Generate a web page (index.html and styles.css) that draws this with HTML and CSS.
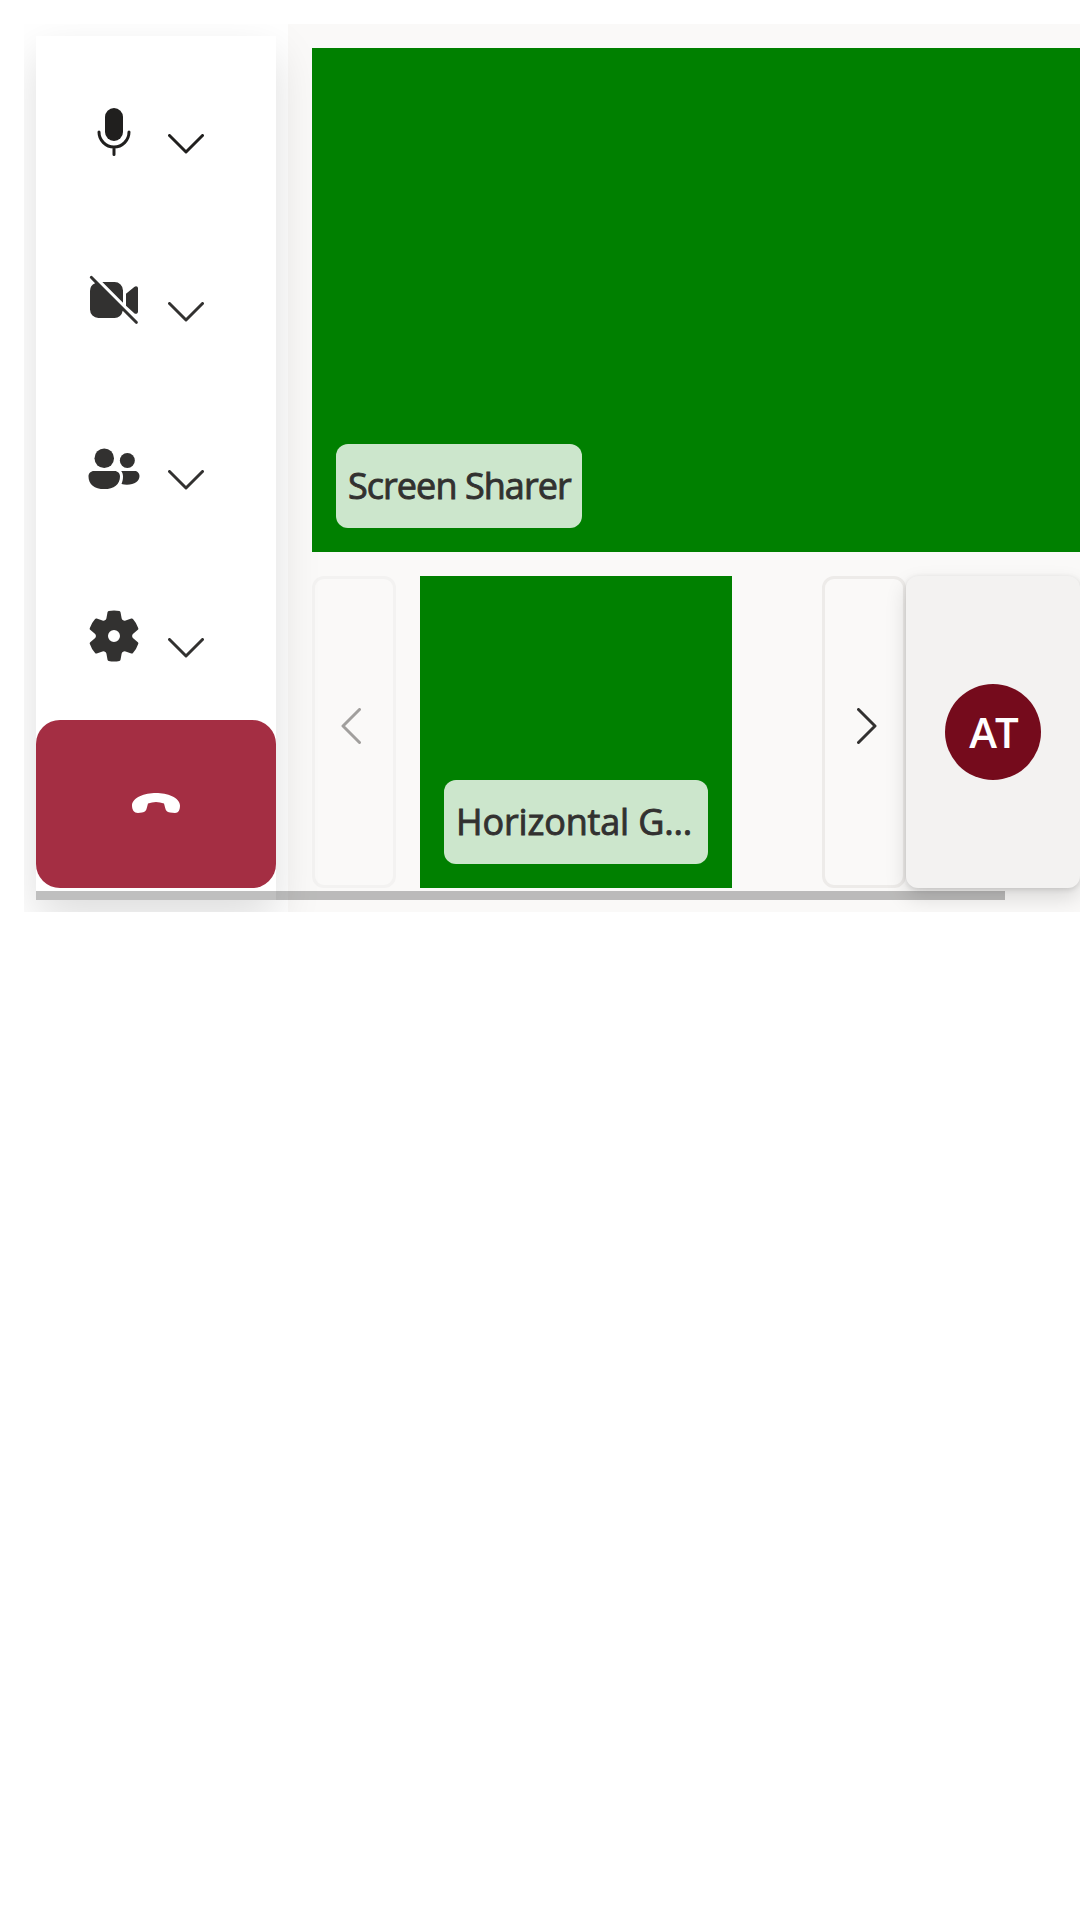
FILE: index.html
```
<!DOCTYPE html>
<html lang="en">
<head>
<meta charset="utf-8">
<title>Call</title>
<link rel="stylesheet" href="styles.css">
</head>
<body>
<main class="call">
  <nav class="controls">
    <button class="control control-active" aria-label="Microphone">
      <svg class="icon" viewBox="0 0 20 20"><rect x="7" y="2" width="6" height="11" rx="3"/><path class="line" d="M5 10a5 5 0 0 0 10 0M10 15v2.5"/></svg>
      <svg class="chevron" viewBox="0 0 36 20"><path d="M1.5 1.5 18 18 34.500 1.500"/></svg>
    </button>
    <button class="control" aria-label="Camera">
      <svg class="icon" viewBox="0 0 20 20"><path d="M2.850 2.150a.5.5 0 1 0-.7.7L3.700 4.400A2.800 2.800 0 0 0 2 7v6.200A2.800 2.800 0 0 0 4.800 16h5.400a2.800 2.800 0 0 0 2.700-2.400l4.250 4.250a.5.5 0 0 0 .7-.7ZM6.120 4h4.080A2.800 2.800 0 0 1 13 6.800v4.080ZM14 7.930l2.750-2.240c.6-.5 1.250-.2 1.250.5v7.620c0 .7-.7 1-1.250.6L14 11.880Z"/></svg>
      <svg class="chevron" viewBox="0 0 36 20"><path d="M1.5 1.5 18 18 34.500 1.500"/></svg>
    </button>
    <button class="control" aria-label="People">
      <svg class="icon" viewBox="0 0 20 20"><circle cx="6.750" cy="6.750" r="3.250"/><circle cx="14.450" cy="7.500" r="2.500"/><path d="M3.300 11h6.900c1 0 1.800.8 1.800 1.800 0 2.600-2 4.200-5.250 4.200S1.500 15.400 1.500 12.800c0-1 .8-1.800 1.800-1.800ZM12.400 11h4.400c1 0 1.700.7 1.700 1.700 0 1.700-1.600 2.850-4.200 2.850-.65 0-1.250-.05-1.800-.2.3-.7.500-1.500.5-2.500 0-.7-.2-1.300-.6-1.850Z"/></svg>
      <svg class="chevron" viewBox="0 0 36 20"><path d="M1.5 1.5 18 18 34.500 1.500"/></svg>
    </button>
    <button class="control" aria-label="Settings">
      <svg class="icon" viewBox="0 0 20 20"><path d="M1.910 7.380A8.500 8.500 0 0 1 3.700 4.300a.5.5 0 0 1 .54-.13l1.920.68a1 1 0 0 0 1.320-.76l.36-2a.5.5 0 0 1 .4-.4 8.530 8.530 0 0 1 3.550 0c.2.04.35.2.38.4l.37 2a1 1 0 0 0 1.320.76l1.920-.68a.5.5 0 0 1 .54.13 8.500 8.500 0 0 1 1.780 3.080c.06.2 0 .4-.15.54l-1.560 1.320a1 1 0 0 0 0 1.520l1.560 1.320a.5.5 0 0 1 .15.54 8.500 8.500 0 0 1-1.780 3.080.5.5 0 0 1-.54.13l-1.920-.68a1 1 0 0 0-1.320.76l-.37 2a.5.5 0 0 1-.38.4 8.530 8.530 0 0 1-3.560 0 .5.5 0 0 1-.39-.4l-.36-2a1 1 0 0 0-1.320-.76l-1.920.68a.5.5 0 0 1-.54-.13 8.500 8.500 0 0 1-1.780-3.080.5.5 0 0 1 .15-.54l1.560-1.320a1 1 0 0 0 0-1.520L2.060 7.920a.5.5 0 0 1-.15-.54ZM8 10a2 2 0 1 0 4 0 2 2 0 0 0-4 0Z"/></svg>
      <svg class="chevron" viewBox="0 0 36 20"><path d="M1.5 1.5 18 18 34.500 1.500"/></svg>
    </button>
    <button class="hang-up" aria-label="Leave">
      <svg class="hang-up-icon" viewBox="0 0 48 20"><path d="M24 0C35 0 48 4.500 48 12.500 48 17 46.500 20 43 20L38 19.400C34.800 19 33.800 17.500 33.200 15L32 10.500Q28 9 24 9T16 10.500L14.800 15C14.200 17.500 13.200 19 10 19.400L6 20C2 20 0 17 0 12.500 0 4.500 13 0 24 0Z"/></svg>
    </button>
  </nav>
  <section class="stage">
    <div class="tile shared-screen"><span class="name">Screen Sharer</span></div>
    <div class="gallery">
      <button class="pager pager-previous" aria-label="Previous"><svg class="arrow" viewBox="0 0 20 36"><path d="M18.500 1.500 2 18 18.500 34.500"/></svg></button>
      <div class="tile participant"><span class="name name-truncated">Horizontal G...</span></div>
      <button class="pager pager-next" aria-label="Next"><svg class="arrow" viewBox="0 0 20 36"><path d="M1.500 1.500 18 18 1.500 34.500"/></svg></button>
      <div class="self"><span class="avatar">AT</span></div>
    </div>
  </section>
  <div class="scrollbar"></div>
</main>
</body>
</html>
```
FILE: styles.css
```
* { box-sizing: border-box; }

body {
  margin: 0;
  padding-top: 24px;
  padding-left: 24px;
  background: #fff;
  color: #323130;
  font-family: "Open Sans", "Noto Sans", sans-serif;
  font-weight: 600;
  overflow: hidden;
}

button {
  padding: 0;
  border: 0;
  background: none;
  color: inherit;
  font: inherit;
}

svg { display: block; flex: none; fill: currentColor; }

.call {
  position: relative;
  display: flex;
  height: 888px;
  overflow: hidden;
}

.controls {
  position: relative;
  display: flex;
  flex: none;
  flex-direction: column;
  width: 240px;
  margin: 12px;
  padding: 12px 0;
  background: #fff;
  box-shadow: 0 19.2px 43.2px rgba(0, 0, 0, .132);
}

.control {
  display: flex;
  align-items: center;
  gap: 24px;
  height: 168px;
  padding-left: 48px;
}

.control-active { color: #201f1e; }

.icon { width: 60px; height: 60px; }

.line {
  fill: none;
  stroke: currentColor;
  stroke-width: 1;
  stroke-linecap: round;
}

.chevron { width: 36px; height: 20px; margin-top: 23px; }

.chevron path,
.arrow path {
  fill: none;
  stroke: currentColor;
  stroke-width: 3;
  stroke-linecap: round;
  stroke-linejoin: round;
}

.hang-up {
  display: flex;
  align-items: center;
  justify-content: center;
  height: 168px;
  border-radius: 24px;
  background: #a42e43;
  color: #fff;
}

.hang-up-icon { width: 48px; height: 20px; margin-bottom: 2px; }

.stage {
  display: flex;
  flex: 1;
  flex-direction: column;
  gap: 24px;
  min-width: 0;
  padding: 24px 0 24px 24px;
  background: #faf9f8;
}

.tile {
  position: relative;
  display: flex;
  align-items: flex-end;
  padding: 24px;
  background: #008000;
}

.shared-screen { height: 504px; }

/* The thin stroke gives the regular face a medium weight. */
.name {
  width: 246px;
  height: 84px;
  padding-left: 12px;
  border-radius: 12px;
  background: rgba(255, 255, 255, .8);
  font-size: 36px;
  font-weight: 400;
  line-height: 84px;
  letter-spacing: -.95px;
  white-space: nowrap;
  -webkit-text-stroke: .9px currentColor;
}

.name-truncated { width: 264px; letter-spacing: -.15px; }

.gallery { display: flex; height: 312px; }

.participant { width: 312px; margin: 0 90px 0 24px; }

.pager {
  display: flex;
  flex: none;
  align-items: center;
  width: 84px;
  padding: 0 26px 12px;
  border: 3px solid #edebe9;
  border-radius: 12px;
}

.pager-previous { border-color: #f3f2f1; color: #a19f9d; }

.pager-next { justify-content: flex-end; }

.arrow { width: 20px; height: 36px; }

.self {
  position: relative;
  display: flex;
  flex: 1;
  align-items: center;
  justify-content: center;
  border-radius: 12px;
  background: #f3f2f1;
  box-shadow: 0 9.6px 21.6px rgba(0, 0, 0, .132), 0 1.8px 5.4px rgba(0, 0, 0, .108);
}

.avatar {
  width: 96px;
  height: 96px;
  border-radius: 50%;
  background: #750b1c;
  color: #fff;
  font-size: 42px;
  letter-spacing: -2px;
  line-height: 96px;
  text-align: center;
}

/* Overlays the bottom edge of the controls and the stage. */
.scrollbar {
  position: absolute;
  bottom: 12px;
  left: 12px;
  width: 969px;
  height: 9px;
  background: rgba(0, 0, 0, .25);
}
```
